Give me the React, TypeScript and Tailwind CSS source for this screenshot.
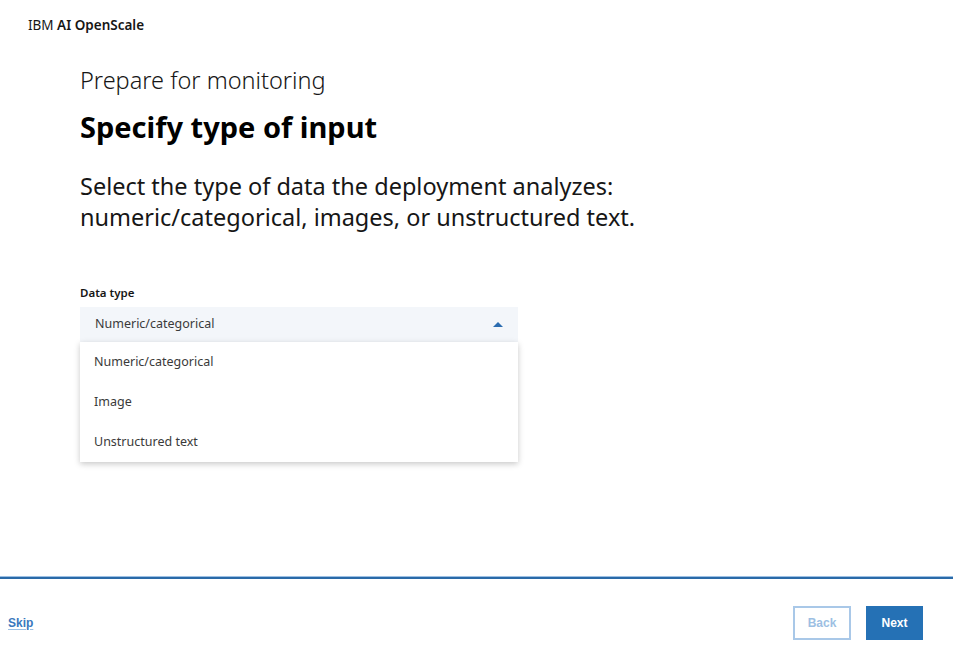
import React from "react";

const items = ["Numeric/categorical", "Image", "Unstructured text"];

export default function App() {
  return (
    <div className="h-[666px] w-full bg-white flex flex-col text-[#161616] font-['Noto_Sans',sans-serif] overflow-hidden">
      <div className="h-[50px] pl-[28px] pt-[16px] shrink-0">
        <div className="text-[13.5px] leading-[18px]">
          IBM <span className="font-semibold">AI OpenScale</span>
        </div>
      </div>
      <div className="flex-1 pl-[80px]">
        <div className="mt-[14px] text-[23.5px] leading-[32px] font-light text-[#161616]">Prepare for monitoring</div>
        <div className="mt-[12px] text-[29px] leading-[38px] font-bold text-[#000]">Specify type of input</div>
        <div className="mt-[25px] text-[23.5px] leading-[31px] text-[#161616]">
          Select the type of data the deployment analyzes:
          <br />
          numeric/categorical, images, or unstructured text.
        </div>
        <div className="mt-[52px] text-[11.5px] leading-[16px] font-semibold text-[#161616]">Data type</div>
        <div className="relative mt-[6px] w-[438px]">
          <div className="h-[35px] bg-[#f3f6fa] flex items-center justify-between pl-[15px] pr-[14px] text-[12.5px] text-[#3a3a3a]">
            <span>Numeric/categorical</span>
            <svg width="10" height="6" viewBox="0 0 10 6" className="mr-[1px]">
              <path d="M0 5 L5 0 L10 5 Z" fill="#2b6cb0" />
            </svg>
          </div>
          <div className="absolute left-0 top-[35px] w-full bg-white shadow-[0_2px_6px_rgba(0,0,0,0.22)] z-10">
            {items.map((t) => (
              <div key={t} className="h-[40px] flex items-center pl-[14px] text-[12.5px] text-[#3a3a3a]">
                {t}
              </div>
            ))}
          </div>
        </div>
      </div>
      <div className="shrink-0">
        <div className="h-[1px] bg-[#9cc0e4]" />
        <div className="h-[2px] bg-[#2a6aa8]" />
        <div className="h-[87px] flex items-center justify-between pl-[8px] pr-[30px] pt-[0px] font-['Liberation_Sans',sans-serif]">
          <a className="text-[12px] font-bold text-[#3a78bd] underline decoration-[#9cc0e4] underline-offset-2">Skip</a>
          <div className="flex gap-[15px]">
            <button className="w-[58px] h-[34px] border-2 border-[#a9c8e8] bg-white text-[12px] font-bold text-[#9dbfe3]">Back</button>
            <button className="w-[57px] h-[34px] bg-[#2571b5] text-[12px] font-bold text-white">Next</button>
          </div>
        </div>
      </div>
    </div>
  );
}
